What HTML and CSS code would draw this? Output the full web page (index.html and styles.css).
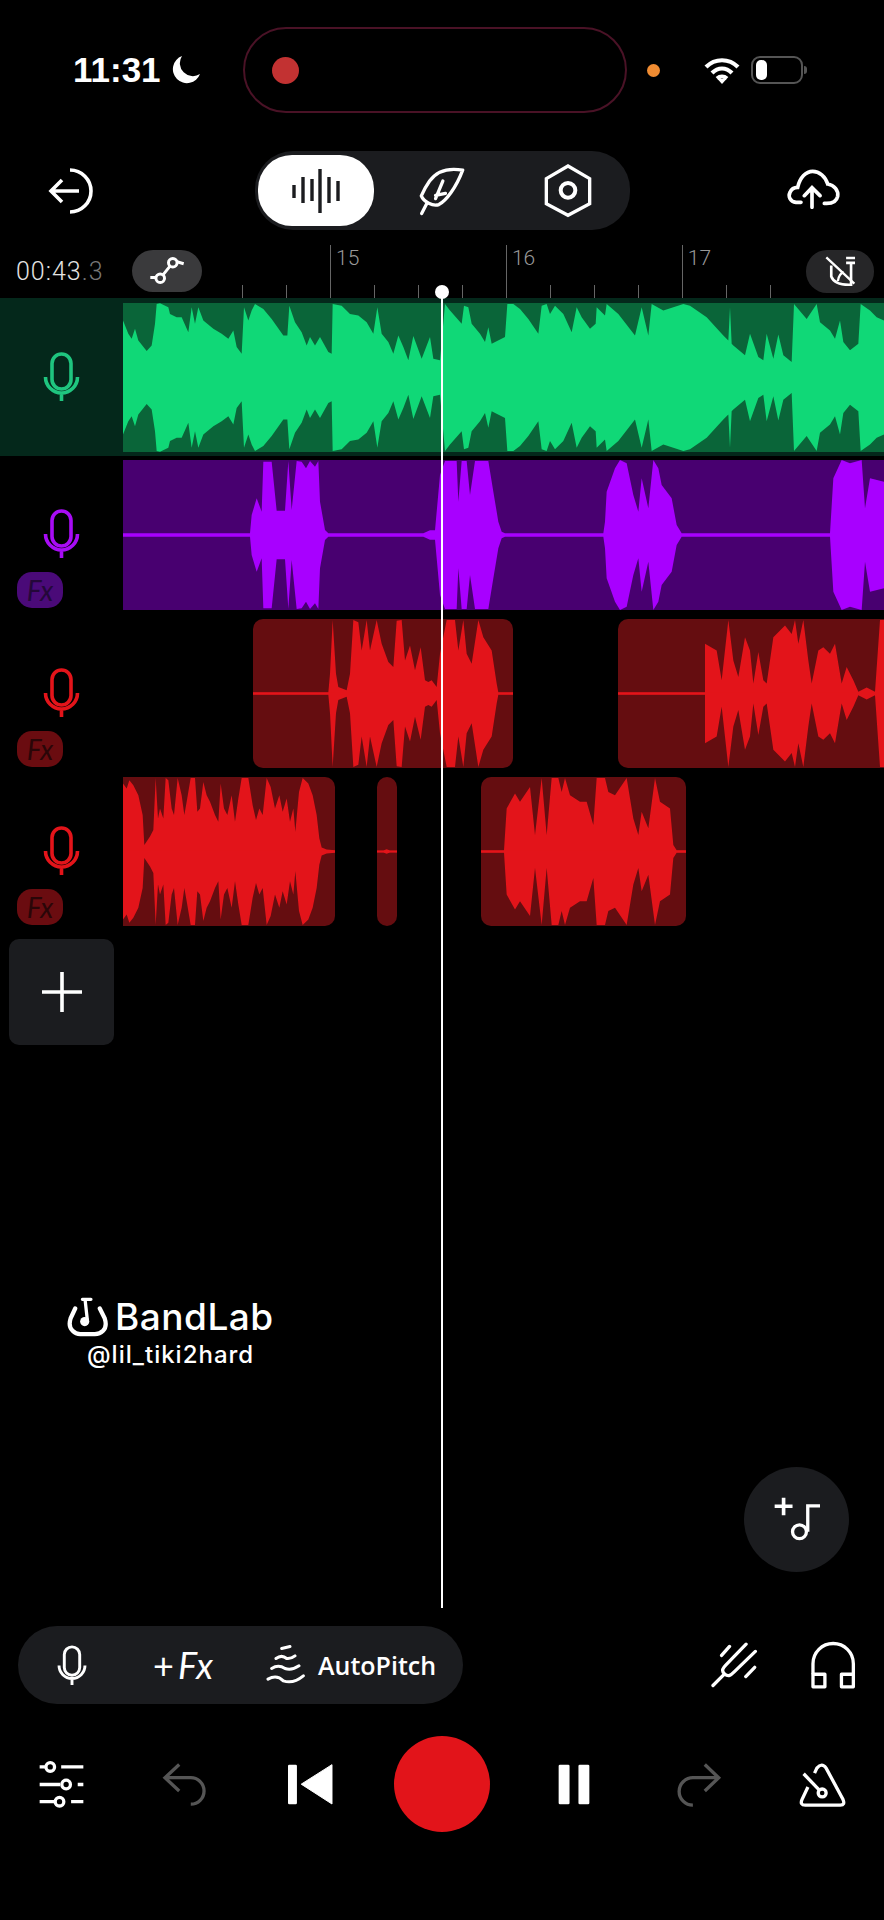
FILE: index.html
```html
<!DOCTYPE html>
<html lang="en">
<head>
  <meta charset="UTF-8" />
  <meta name="viewport" content="width=device-width, initial-scale=1.0"/>
  <title>BandLab Studio</title>
  <link rel="stylesheet" href="styles.css">
</head>
<body>
  <svg class="sprite">
    <symbol id="mic" viewBox="0 0 37 50">
      <rect x="9" y="2" width="19" height="35" rx="9.5" fill="none" stroke="currentColor" stroke-width="3.6"/>
      <path d="M2.5 25a16 16 0 0 0 32 0M18.5 41v8" fill="none" stroke="currentColor" stroke-width="3.6"/>
    </symbol>
  </svg>

  <div class="phone">
    <!-- Status bar -->
    <div class="status">
      <div class="clock">
        <span>11:31</span>
        <svg class="moon" viewBox="0 0 28 28"><path d="M10 0A14 14 0 1 0 28 18 13 13 0 0 1 10 0Z" fill="#fff"/></svg>
      </div>
      <div class="island"><span class="rec-dot"></span></div>
      <span class="mic-dot"></span>
      <svg class="wifi" viewBox="0 0 36 27" fill="none" stroke="#fff" stroke-width="4.2">
        <path d="M2 10C11 1 25 1 34 10M8 16C14 10 22 10 28 16"/>
        <path d="M13 21.5C16 19 20 19 23 21.5"/>
        <path d="M18 27l-4.5-5h9z" fill="#fff" stroke="none"/>
      </svg>
      <div class="battery"><span class="level"></span></div>
      <span class="battery-tip"></span>
    </div>

    <!-- Top toolbar -->
    <div class="toolbar">
      <svg class="back" viewBox="0 0 46 46" fill="none" stroke="#fff" stroke-width="3.6">
        <path d="M3 23H31M14 12 3 23l11 11M22 2a21 21 0 0 1 0 42"/>
      </svg>
      <div class="segment">
        <div class="seg-active">
          <svg class="bars" viewBox="0 0 50 46" stroke="#1b1c1f" stroke-width="3.4">
            <path d="M3 17v13M12 9v26M21 11v22M29 1v44M38 9v26M47 13v20"/>
          </svg>
        </div>
        <svg class="feather" viewBox="55 40 145 150" fill="none" stroke="#fff" stroke-width="10" stroke-linejoin="round">
          <path d="M190 52C150 45 115 50 90 85 78 102 70 118 65 130 72 148 100 162 118 156 140 145 170 105 190 52Z"/>
          <path d="M130 85 108 138M108 128 138 122M82 152 66 183" stroke-linecap="round"/>
        </svg>
        <svg class="hex" viewBox="430 38 150 165" fill="none" stroke="#fff" stroke-width="10">
          <path d="M505 47 570 85V160L505 195 440 160V85Z"/>
          <circle cx="505" cy="120" r="22" stroke-width="12"/>
        </svg>
      </div>
      <svg class="cloud" viewBox="50 40 165 120" fill="none" stroke="#fff" stroke-width="11" stroke-linecap="round">
        <path d="M95 140H80C62 138 56 122 62 110 66 100 76 95 85 95 92 65 110 47 130 47 150 47 168 62 175 85 195 88 208 105 205 122 202 136 190 145 165 143"/>
        <path d="M128 155V97M105 120 128 96 152 120"/>
      </svg>
    </div>

    <!-- Ruler row -->
    <div class="timebar">
      <div class="position">00:43<span class="tenth">.3</span></div>
      <button class="round-btn">
        <svg class="link-icon" viewBox="55 35 115 90" fill="none" stroke="#fff" stroke-width="9">
          <circle cx="92" cy="102" r="13"/><circle cx="130" cy="55" r="13"/>
          <path d="M101 91 121 66M62 100H79M143 52 163 58"/>
        </svg>
      </button>
      <div class="ruler">
        <div class="bar-mark">15</div>
        <div class="bar-mark">16</div>
        <div class="bar-mark">17</div>
      </div>
      <button class="round-btn snap">
        <svg class="magnet-icon" viewBox="158 303 100 100" fill="none" stroke="#fff" stroke-width="8">
          <path d="M180 335V368Q190 395 240 393V330M225 312H252M225 327H252"/>
          <path d="M165 310 250 390M200 382Q203 360 218 355" stroke-width="7"/>
        </svg>
      </button>
    </div>

    <!-- Tracks -->
    <div class="tracks">
      <div class="track track-green">
        <div class="head">
          <svg class="mic"><use href="#mic"/></svg>
        </div>
        <div class="lane">
          <div class="clip clip-full">
            <svg viewBox="369 -225 2283 450" preserveAspectRatio="none">
              <path id="wave1" d="M369 2V-172L385-132 395-117 405-147 415-112 440-80 455-97 465-162 470-222 480-224 505-212 510-192 530-182 545-182 565-137 575-212 585-162 595-212 610-172 640-147 665-132 685-117 700-142 710-92 725-72 732-212 745-172 755-202 765-222 790-207 815-177 850-127 862-127 868-217 885-167 905-137 920-97 930-122 945-97 960-122 985-77 995-72 998-222 1025-217 1050-192 1075-187 1100-167 1120-132 1132-212 1145-132 1165-107 1180-72 1195-127 1210-92 1225-52 1240-125 1265-57 1290-122 1300-57 1320-52 1335-222 1350-202 1385-162 1392-217 1405-212 1415-162 1440-132 1455-107 1465-152 1475-102 1515-122 1522-222 1540-222 1560-207 1585-177 1615-132 1625-217 1640-222 1650-192 1665-217 1690-192 1715-137 1730-212 1745-182 1770-147 1787-162 1790-212 1815-187 1820-222 1855-192 1905-127 1925-212 1945-127 1955-222 1990-202 2050-222 2070-217 2120-182 2170-127 2185-112 2190-212 2195-102 2200-97 2235-67 2250-132 2275-62 2290-52 2300-132 2320-57 2335-130 2350-67 2375-47 2382-222 2420-177 2450-222 2460-167 2490-142 2505-117 2520-172 2530-107 2550-82 2575-102 2582-222 2610-202 2630-182 2652-172V2Z"/>
              <use href="#wave1" transform="scale(1 -1)"/>
            </svg>
          </div>
        </div>
      </div>

      <div class="track track-purple">
        <div class="head">
          <svg class="mic"><use href="#mic"/></svg>
          <span class="fx">Fx</span>
        </div>
        <div class="lane">
          <div class="clip clip-full">
            <svg viewBox="369 -225 2283 450" preserveAspectRatio="none">
              <path id="wave2" d="M369 2V-5H750L755-60 770-110 785-70 790-220 815-220 830-73 855-73 865-222 875-75 890-222 905-220 918-200 930-222 945-205 955-222 960-100 975-15 985-5H1270L1290-14 1305-14 1320-180 1335-222 1370-222 1375-100 1385-222 1400-222 1410-120 1425-222 1465-222 1480-130 1495-40 1505-10 1515-5H1810L1815-40 1820-130 1845-200 1860-225 1880-215 1900-120 1915-70 1925-170 1945-80 1960-225 1975-200 1985-150 2015-110 2030-30 2045-5H2490L2500-170 2525-225 2550-215 2585-225 2595-80 2610-170 2652-160V2Z"/>
              <use href="#wave2" transform="scale(1 -1)"/>
            </svg>
          </div>
        </div>
      </div>

      <div class="track track-red">
        <div class="head">
          <svg class="mic"><use href="#mic"/></svg>
          <span class="fx">Fx</span>
        </div>
        <div class="lane">
          <div class="clip clip-a">
            <svg viewBox="759 -225 780 450" preserveAspectRatio="none">
              <path id="wave3" d="M759 2V-4H985L990-60 998-222 1008-60 1015-20 1040-10 1050-60 1060-222 1075-215 1085-130 1100-222 1110-130 1130-222 1145-150 1165-95 1180-80 1190-220 1205-222 1215-100 1230-145 1245-70 1262-140 1275-40 1285-35 1295-40 1310-20 1320-120 1340-222 1365-222 1375-130 1390-222 1400-120 1415-90 1435-222 1450-170 1475-130 1490-30 1495-4H1539V2Z"/>
              <use href="#wave3" transform="scale(1 -1)"/>
            </svg>
          </div>
          <div class="clip clip-b">
            <svg viewBox="1854 -225 798 450" preserveAspectRatio="none">
              <path id="wave4" d="M1854 2V-4H2115V-150L2150-130 2165-40 2185-222 2200-100 2215-50 2235-170 2250-130 2260-30 2275-125 2290-40 2300-30 2320-170 2355-205 2375-180 2385-222 2395-150 2410-222 2425-100 2435-30 2455-130 2470-140 2490-120 2505-150 2525-30 2540-80 2560-40 2575-5 2600-18 2625-5 2640-222 2652-222V2Z"/>
              <use href="#wave4" transform="scale(1 -1)"/>
            </svg>
          </div>
        </div>
      </div>

      <div class="track track-red">
        <div class="head">
          <svg class="mic"><use href="#mic"/></svg>
          <span class="fx">Fx</span>
        </div>
        <div class="lane">
          <div class="clip clip-c">
            <svg viewBox="369 -225 636 450" preserveAspectRatio="none">
              <path id="wave5" d="M369 2V-205L380-190 388-215 400-200 415-170 428-110 433-20 440-30 450-45 460-65 467-222 474-100 480-130 490-100 497-222 505-215 515-130 522-110 533-222 545-170 553-110 560-150 572-222 585-222 592-120 600-130 610-210 620-170 630-150 645-110 655-90 662-205 672-130 682-110 695-170 705-90 715-160 725-222 745-222 758-140 768-95 778-130 788-110 800-222 812-195 825-130 838-170 848-120 860-160 870-90 880-130 886-60 897-180 908-222 925-205 938-170 950-110 958-40 965-12 980-6 1005-4V2Z"/>
              <use href="#wave5" transform="scale(1 -1)"/>
            </svg>
          </div>
          <div class="clip clip-d">
            <svg viewBox="1131 -225 60 450" preserveAspectRatio="none">
              <path id="wave6" d="M1131 2V-3H1150L1160-7 1170-3H1191V2Z"/>
              <use href="#wave6" transform="scale(1 -1)"/>
            </svg>
          </div>
          <div class="clip clip-e">
            <svg viewBox="1443 -225 615 450" preserveAspectRatio="none">
              <path id="wave7" d="M1443 2V-4H1512L1520-130 1545-175 1560-150 1590-195 1605-50 1625-222 1640-50 1655-222 1675-222 1685-180 1695-222 1710-170 1740-150 1760-150 1780-80 1790-222 1815-222 1825-180 1845-170 1880-222 1900-100 1915-50 1925-120 1945-70 1965-222 1980-150 2010-130 2020-20 2030-4H2058V2Z"/>
              <use href="#wave7" transform="scale(1 -1)"/>
            </svg>
          </div>
        </div>
      </div>
    </div>

    <button class="add-track">
      <svg viewBox="0 0 44 44" stroke="#fff" stroke-width="3.6"><path d="M22 2V42M2 22H42"/></svg>
    </button>

    <!-- Watermark -->
    <div class="brand">
      <div class="brand-row">
        <svg class="brand-logo" viewBox="75 80 125 122" fill="none" stroke="#fff" stroke-width="13" stroke-linecap="round">
          <path d="M100 115 86 145Q78 170 92 183 102 193 115 193H160Q175 193 185 183 198 170 190 145L175 115"/>
          <path d="M122 87H148M130 87 137 150" stroke-width="10"/>
          <circle cx="129" cy="155" r="14" fill="#fff" stroke="none"/>
        </svg>
        <span class="brand-name">BandLab</span>
      </div>
      <div class="brand-user">@lil_tiki2hard</div>
    </div>

    <button class="fab">
      <svg viewBox="875 170 145 145" fill="none" stroke="#fff" stroke-width="10">
        <path d="M907 175V228M880 201H934" stroke-width="11"/>
        <path d="M980 278V200H1017"/>
        <circle cx="955" cy="278" r="21"/>
      </svg>
    </button>

    <!-- Record options -->
    <div class="dock">
      <div class="options">
        <svg class="opt-mic"><use href="#mic"/></svg>
        <span class="add-fx">+<em>Fx</em></span>
        <svg class="opt-wave" viewBox="798 135 120 125" fill="none" stroke="#fff" stroke-width="9" stroke-linecap="round">
          <path d="M845 148 870 142M828 178Q845 165 860 178 872 180 885 170M815 208Q835 195 855 208 875 215 897 200M804 240Q830 225 850 245 880 255 910 230"/>
        </svg>
        <span class="opt-label">AutoPitch</span>
      </div>
      <svg class="fork" viewBox="692 612 142 138" fill="none" stroke="#fff" stroke-width="10" stroke-linecap="round">
        <path d="M698 743 733 708M733 708C722 698 728 690 738 680L798 618M733 708C745 718 752 712 762 702L826 640M724 652 748 625M797 716 824 688"/>
      </svg>
      <svg class="phones" viewBox="985 600 142 147" fill="none" stroke="#fff" stroke-width="10">
        <path d="M994 700V668A61 61 0 0 1 1116 668V700"/>
        <path d="M994 700H1030V738H994ZM1080 700H1116V738H1080Z" stroke-linejoin="round"/>
      </svg>
    </div>

    <!-- Transport -->
    <div class="transport">
      <svg class="sliders" viewBox="115 483 142 140" fill="none" stroke="#fff" stroke-width="10">
        <path d="M120 500H136M185 500H252M120 553H182M235 553H252M120 605H165M215 605H252"/>
        <circle cx="152" cy="500" r="13"/><circle cx="200" cy="553" r="13"/><circle cx="180" cy="605" r="13"/>
      </svg>
      <svg class="undo" viewBox="488 488 145 135" fill="none" stroke="#555" stroke-width="10">
        <path d="M540 495 497 535 540 575M497 535H575A40 40 0 0 1 575 615"/>
      </svg>
      <svg class="prev" viewBox="860 488 143 130" fill="#fff">
        <rect x="865" y="493" width="27" height="120" rx="4"/>
        <path d="M998 493V612L905 552Z" stroke="#fff" stroke-width="3" stroke-linejoin="round"/>
      </svg>
      <div class="record"></div>
      <svg class="pause" viewBox="232 968 103 128" fill="#fff">
        <rect x="237" y="972" width="33" height="120" rx="4"/>
        <rect x="297" y="972" width="33" height="120" rx="4"/>
      </svg>
      <svg class="redo" viewBox="583 965 145 135" fill="none" stroke="#555" stroke-width="10">
        <path d="M676 972 718 1012 676 1052M718 1012H640A40 40 0 0 0 640 1095"/>
      </svg>
      <svg class="metro" viewBox="955 965 148 135" fill="none" stroke="#fff" stroke-width="10">
        <path d="M985 1040 967 1078Q960 1095 977 1095H1083Q1098 1095 1091 1078L1040 983Q1027 965 1012 983L1005 998"/>
        <path d="M972 1000 1018 1048"/>
        <circle cx="1028" cy="1058" r="12"/>
      </svg>
    </div>

    <div class="playhead"></div>
  </div>
</body>
</html>
```

FILE: styles.css
```css
body {
  margin: 0;
  background: #000;
  color: #fff;
  font-family: 'Lato', 'Open Sans', sans-serif;
}

.sprite {
  display: none;
}

svg {
  display: block;
  flex-shrink: 0;
}

button {
  border: none;
  padding: 0;
}

.phone {
  position: relative;
  width: 884px;
  height: 1920px;
  overflow: hidden;
}

/* Status bar */
.status {
  display: flex;
  align-items: center;
  padding: 27px 0 0 73px;
}

.clock {
  display: flex;
  align-items: center;
  width: 170px;
  font-family: 'Liberation Sans', sans-serif;
  font-size: 35px;
  font-weight: 700;
}

.moon {
  width: 28px;
  height: 28px;
  margin-left: 11px;
}

.island {
  display: flex;
  align-items: center;
  box-sizing: border-box;
  width: 384px;
  height: 86px;
  padding-left: 27px;
  border: 2px solid #4a1226;
  border-radius: 43px;
}

.rec-dot {
  width: 27px;
  height: 27px;
  border-radius: 50%;
  background: #c23232;
}

.mic-dot {
  width: 13px;
  height: 13px;
  margin-left: 20px;
  border-radius: 50%;
  background: #f08c32;
}

.wifi {
  width: 36px;
  height: 27px;
  margin-left: 44px;
}

.battery {
  display: flex;
  align-items: center;
  box-sizing: border-box;
  width: 52px;
  height: 28px;
  margin-left: 11px;
  padding-left: 3px;
  border: 2px solid #555;
  border-radius: 9px;
}

.level {
  width: 11px;
  height: 20px;
  border-radius: 5px;
  background: #fff;
}

.battery-tip {
  width: 3px;
  height: 8px;
  margin-left: 1px;
  border-radius: 0 3px 3px 0;
  background: #555;
}

/* Top toolbar */
.toolbar {
  display: flex;
  align-items: center;
  height: 79px;
  margin-top: 38px;
  padding-left: 48px;
}

.back {
  width: 46px;
  height: 46px;
}

.segment {
  display: flex;
  align-items: center;
  box-sizing: border-box;
  width: 375px;
  height: 79px;
  margin-left: 161px;
  padding: 0 3px;
  border-radius: 38px;
  background: #1b1c1f;
}

.seg-active {
  display: flex;
  align-items: center;
  justify-content: center;
  width: 116px;
  height: 71px;
  border-radius: 34px;
  background: #fff;
}

.bars {
  width: 50px;
  height: 46px;
}

.feather {
  width: 48px;
  height: 50px;
  margin-left: 44px;
}

.hex {
  width: 50px;
  height: 55px;
  margin-left: 77px;
}

.cloud {
  width: 55px;
  height: 40px;
  margin: -4px 0 0 156px;
}

/* Ruler */
.timebar {
  display: flex;
  align-items: flex-start;
  height: 53px;
  margin-top: 15px;
  padding-left: 16px;
}

.position {
  width: 116px;
  margin-top: 12px;
  font-family: 'Roboto', sans-serif;
  font-size: 25px;
  font-weight: 300;
  letter-spacing: 1px;
  color: #e4e4e4;
}

.tenth {
  color: #777;
}

.round-btn {
  display: flex;
  align-items: center;
  justify-content: center;
  flex-shrink: 0;
  width: 70px;
  height: 42px;
  margin-top: 5px;
  border-radius: 21px;
  background: #3a3a3c;
}

.link-icon {
  width: 38px;
  height: 30px;
}

.snap {
  width: 68px;
  height: 43px;
  background: #262628;
}

.magnet-icon {
  width: 33px;
  height: 33px;
}

.ruler {
  display: flex;
  box-sizing: border-box;
  width: 564px;
  height: 53px;
  margin-left: 40px;
  padding-left: 88px;
  background: repeating-linear-gradient(to right, #666 0 1px, transparent 1px 43.97px) left bottom / 100% 13px no-repeat;
}

.bar-mark {
  flex-shrink: 0;
  box-sizing: border-box;
  width: 175.9px;
  height: 53px;
  padding-left: 5px;
  border-left: 1px solid #666;
  font-family: 'Roboto', sans-serif;
  font-size: 21px;
  font-weight: 300;
  line-height: 26px;
  color: #999;
}

/* Tracks */
.track {
  display: flex;
  height: 150px;
  margin-top: 8px;
}

.track-green {
  height: 149px;
  margin-top: 0;
  padding: 5px 0 4px;
  background: #04281b;
  color: #1fc57f;
}

.track-purple {
  margin-top: 4px;
  color: #a80cf5;
}

.track-red {
  height: 149px;
  margin-top: 9px;
  color: #e3141a;
}

.head {
  box-sizing: border-box;
  width: 123px;
  padding-top: 49px;
}

.mic {
  width: 37px;
  height: 50px;
  margin-left: 43px;
}

.fx {
  display: block;
  width: 46px;
  height: 36px;
  margin: 13px 0 0 17px;
  border-radius: 15px;
  font-size: 28px;
  font-style: italic;
  line-height: 36px;
  text-align: center;
}

.track-purple .fx {
  background: #4a0a78;
  color: #24083a;
}

.track-red .fx {
  background: #6a0c10;
  color: #2a0608;
}

.lane {
  display: flex;
  flex: 1;
}

.clip {
  height: 100%;
  overflow: hidden;
}

.clip svg {
  width: 100%;
  height: 100%;
}

.clip-full {
  width: 761px;
}

.track-green .clip {
  background: #0a6539;
  fill: #10d877;
}

.track-purple .clip {
  background: #480070;
  fill: #a800ff;
}

.track-red .clip {
  border-radius: 10px;
  background: #650d10;
  fill: #e3141a;
}

.clip-a {
  width: 260px;
  margin-left: 130px;
}

.clip-b {
  width: 266px;
  margin-left: 105px;
}

.track-red .clip-b {
  border-radius: 10px 0 0 10px;
}

.clip-c {
  width: 212px;
}

.track-red .clip-c {
  border-radius: 0 10px 10px 0;
}

.clip-d {
  width: 20px;
  margin-left: 42px;
}

.clip-e {
  width: 205px;
  margin-left: 84px;
}

.add-track {
  display: flex;
  align-items: center;
  justify-content: center;
  width: 105px;
  height: 106px;
  margin: 13px 0 0 9px;
  border-radius: 10px;
  background: #1b1c1f;
}

.add-track svg {
  width: 44px;
  height: 44px;
}

/* Watermark */
.brand {
  margin: 252px 0 0 67px;
}

.brand-row {
  display: flex;
  align-items: center;
  height: 40px;
}

.brand-logo {
  width: 41px;
  height: 40px;
}

.brand-name {
  margin-left: 7px;
  font-family: 'Inter', sans-serif;
  font-size: 37px;
  font-weight: 500;
  letter-spacing: 0.5px;
  line-height: 40px;
}

.brand-user {
  height: 30px;
  margin: 3px 0 0 20px;
  font-family: 'Inter', sans-serif;
  font-size: 24px;
  font-weight: 500;
  letter-spacing: 1px;
  line-height: 30px;
}

.fab {
  display: flex;
  align-items: center;
  justify-content: center;
  width: 105px;
  height: 105px;
  margin: 97px 0 0 744px;
  border-radius: 50%;
  background: #1b1c1f;
}

.fab svg {
  width: 48px;
  height: 48px;
}

/* Record options */
.dock {
  display: flex;
  align-items: center;
  height: 78px;
  margin: 54px 0 0 18px;
}

.options {
  display: flex;
  align-items: center;
  box-sizing: border-box;
  width: 445px;
  height: 78px;
  padding-left: 39px;
  border-radius: 39px;
  background: #1b1c1f;
}

.opt-mic {
  width: 30px;
  height: 41px;
  color: #fff;
}

.add-fx {
  margin-left: 66px;
  font-size: 36px;
  letter-spacing: 1px;
}

.add-fx em {
  margin-left: 3px;
}

.opt-wave {
  width: 40px;
  height: 42px;
  margin-left: 52px;
}

.opt-label {
  margin-left: 12px;
  font-family: 'Open Sans', sans-serif;
  font-size: 25px;
  font-weight: 600;
}

.fork {
  width: 47px;
  height: 46px;
  margin-left: 248px;
}

.phones {
  width: 47px;
  height: 49px;
  margin-left: 52px;
}

/* Transport */
.transport {
  display: flex;
  align-items: center;
  height: 96px;
  margin-top: 32px;
  padding-left: 38px;
}

.sliders {
  width: 47px;
  height: 47px;
}

.undo {
  width: 48px;
  height: 45px;
  margin-left: 77px;
}

.prev {
  width: 48px;
  height: 43px;
  margin-left: 76px;
}

.record {
  width: 96px;
  height: 96px;
  margin-left: 60px;
  border-radius: 50%;
  background: #e2141a;
}

.pause {
  width: 34px;
  height: 43px;
  margin-left: 67px;
}

.redo {
  width: 48px;
  height: 45px;
  margin-left: 83px;
}

.metro {
  width: 49px;
  height: 45px;
  margin-left: 76px;
}

/* Sits over the tracks */
.playhead {
  position: absolute;
  top: 292px;
  left: 441px;
  width: 2px;
  height: 1316px;
  background: #fff;
}

.playhead::before {
  content: "";
  position: absolute;
  top: -7px;
  left: -6px;
  width: 14px;
  height: 14px;
  border-radius: 50%;
  background: #fff;
}
```
